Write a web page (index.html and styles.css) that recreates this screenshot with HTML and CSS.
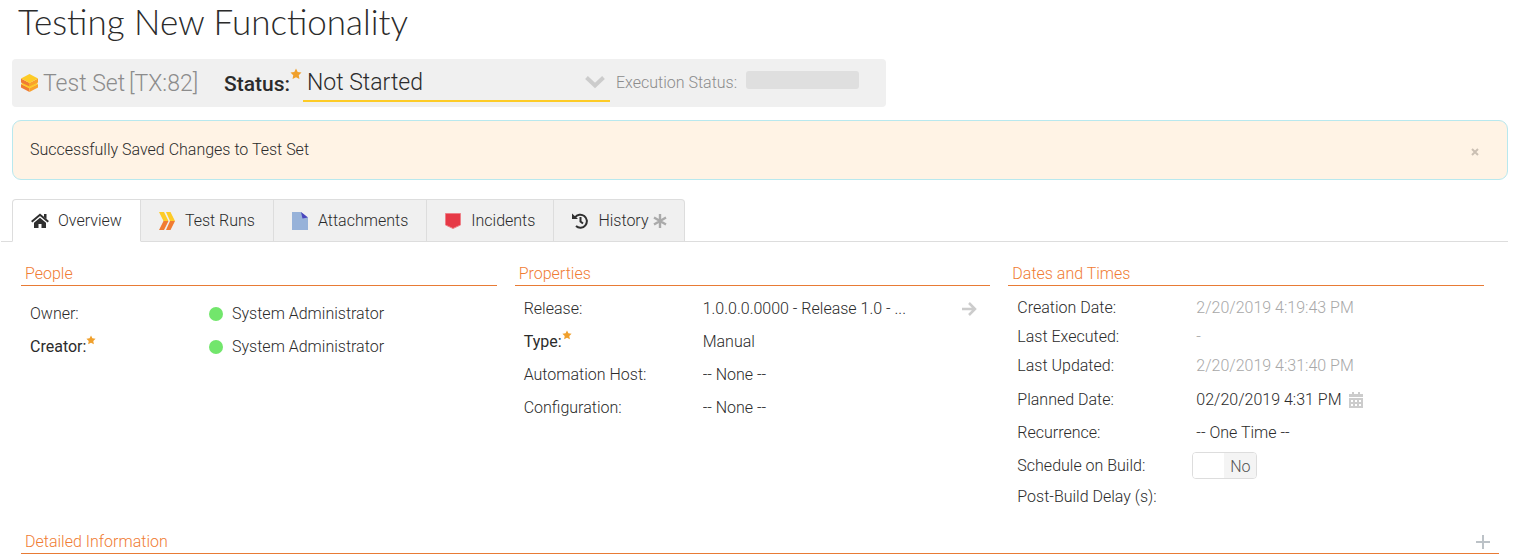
FILE: index.html
```html
<!DOCTYPE html>
<html lang="en">
<head>
<meta charset="utf-8">
<meta name="viewport" content="width=device-width, initial-scale=1">
<title>Testing New Functionality</title>
<link rel="stylesheet" href="styles.css">
</head>
<body>
<svg class="defs" width="0" height="0" aria-hidden="true">
  <symbol id="star" viewBox="0 0 24 24"><path fill="#f0a02c" d="M12 1l3.400 7 7.600 1-5.500 5.300 1.400 7.700L12 18.300 5.100 22l1.400-7.700L1 9l7.600-1z"/></symbol>
</svg>
<main class="page">
  <h1 class="title">Testing New Functionality</h1>

  <div class="status-bar">
    <svg class="artifact-icon" viewBox="0 0 17 18" aria-hidden="true">
      <path fill="#f07c33" d="M0 10v3.500L8.500 18v-4z"/><path fill="#f9a12b" d="M17 10v3.500L8.500 18v-4z"/>
      <path fill="#fdcb26" d="M0 10l2-1.500h13l2 1.500-8.500 4.500z"/>
      <path fill="#f07c33" d="M0 4.500v4l8.500 4V9z"/><path fill="#f9a12b" d="M17 4.500v4l-8.500 4V9z"/>
      <path fill="#fdcb26" d="M8.500 0L17 4.500 8.500 9 0 4.500z"/>
    </svg>
    <span class="artifact-name">Test Set</span>
    <span class="artifact-id">[TX:82]</span>
    <label class="status-label" for="status">Status:<svg class="star star-large" aria-hidden="true"><use href="#star"/></svg></label>
    <span class="status-field">
      <select id="status" class="status-select"><option>Not Started</option></select>
      <svg class="chevron" viewBox="0 0 20 14" aria-hidden="true"><path fill="none" stroke="#ccc" stroke-width="4" d="M1.500 2.500L10 10.500l8.500-8"/></svg>
    </span>
    <span class="execution-label">Execution Status:</span>
    <span class="execution-bar"></span>
  </div>

  <div class="alert" role="status">
    <span>Successfully Saved Changes to Test Set</span>
    <button class="alert-close" type="button" aria-label="Close"><svg viewBox="0 0 8 8" width="8" height="8"><path fill="none" stroke="#cbbfb3" stroke-width="2" d="M1 1l6 6M7 1L1 7"/></svg></button>
  </div>

  <nav class="tabs">
    <a class="tab tab-active" href="#overview">
      <svg class="tab-icon tab-icon-wide" viewBox="0 0 18 16" aria-hidden="true"><path fill="none" stroke="#2f2f2f" stroke-width="2" d="M.7 8.700L9 1.700l8.300 7"/><path fill="#2f2f2f" d="M13 1h2.500v5L13 4zM9 4.700l6 5V15h-4.500v-4h-3v4H3V9.700z"/></svg>
      <span>Overview</span></a>
    <a class="tab" href="#runs">
      <svg class="tab-icon" viewBox="0 0 16 18" aria-hidden="true"><path fill="#fdcb26" d="M0 0h5l4.500 9h-5zM7 0h4.500L16 9h-5z"/><path fill="#f07c33" d="M4.500 9h5L5 18H0zM11 9h5l-4.500 9H7z"/></svg>
      <span>Test Runs</span></a>
    <a class="tab" href="#attachments">
      <svg class="tab-icon" viewBox="0 0 16 18" aria-hidden="true"><path fill="#97b2d9" d="M0 0h9l7 6v12H0z"/><path fill="#4a46bd" d="M9 0l7 5.500-5.500 1z"/></svg>
      <span>Attachments</span></a>
    <a class="tab" href="#incidents">
      <svg class="tab-icon" viewBox="0 0 16 18" aria-hidden="true"><path fill="#e63946" stroke="#ee8088" d="M.5 1.500h15V13L8 16.500.5 13z"/></svg>
      <span>Incidents</span></a>
    <a class="tab" href="#history">
      <svg class="tab-icon" viewBox="0 0 16 18" aria-hidden="true"><path fill="none" stroke="#2f2f2f" stroke-width="2" d="M3 5.500A6.500 6.500 0 1 1 4 14M8.500 5v4.500l2.500 2"/><path fill="#2f2f2f" d="M0 1.500l6 5.500H0z"/></svg>
      <span>History</span>
      <svg class="asterisk" viewBox="0 0 14 14" role="img" aria-label="Has data"><path stroke="#aaa" stroke-width="2.400" d="M7 0v14M1 3.500l12 7M13 3.500l-12 7"/></svg></a>
  </nav>

  <div class="columns" id="overview">
    <section>
      <h2 class="heading">People</h2>
      <div class="fields fields-people">
        <div class="field"><label class="label" for="owner">Owner:</label><span class="dot"></span><select id="owner" class="value"><option>System Administrator</option></select></div>
        <div class="field"><label class="label required" for="creator">Creator:<svg class="star" aria-hidden="true"><use href="#star"/></svg></label><span class="dot"></span><select id="creator" class="value"><option>System Administrator</option></select></div>
      </div>
    </section>

    <section>
      <h2 class="heading">Properties</h2>
      <div class="fields">
        <div class="field"><label class="label" for="release">Release:</label><select id="release" class="value value-release"><option>1.0.0.0.0000 - Release 1.0 - ...</option></select>
          <a class="go" href="#release" aria-label="Open release"><svg viewBox="0 0 15 14" width="15" height="14"><path fill="none" stroke="#ccc" stroke-width="2.500" d="M0 7h13M7 1l6 6-6 6"/></svg></a></div>
        <div class="field"><label class="label required" for="type">Type:<svg class="star" aria-hidden="true"><use href="#star"/></svg></label><select id="type" class="value"><option>Manual</option></select></div>
        <div class="field"><label class="label" for="host">Automation Host:</label><select id="host" class="value"><option>-- None --</option></select></div>
        <div class="field"><label class="label" for="config">Configuration:</label><select id="config" class="value"><option>-- None --</option></select></div>
      </div>
    </section>

    <section>
      <h2 class="heading">Dates and Times</h2>
      <div class="fields">
        <div class="static-group">
          <div class="field field-short"><span class="label">Creation Date:</span><span class="readonly">2/20/2019 4:19:43 PM</span></div>
          <div class="field field-short"><span class="label">Last Executed:</span><span class="readonly">-</span></div>
          <div class="field field-short"><span class="label">Last Updated:</span><span class="readonly">2/20/2019 4:31:40 PM</span></div>
        </div>
        <div class="field"><label class="label" for="planned">Planned Date:</label><input id="planned" class="value value-date" type="text" value="02/20/2019 4:31 PM">
          <button class="calendar" type="button" aria-label="Pick a date"><svg viewBox="0 0 14 16" width="14" height="16"><path fill="#ccc" fill-rule="evenodd" d="M0 2h3V0h2v2h4V0h2v2h3v3H0zM0 6h14v10H0zM2 8v2h2V8zm4 0v2h2V8zm4 0v2h2V8zM2 12v2h2v-2zm4 0v2h2v-2zm4 0v2h2v-2z"/></svg></button></div>
        <div class="field"><label class="label" for="recurrence">Recurrence:</label><select id="recurrence" class="value"><option>-- One Time --</option></select></div>
        <div class="field"><label class="label label-toggle" for="build">Schedule on Build:</label><span class="toggle"><input id="build" class="toggle-input" type="checkbox"><span class="toggle-text">No</span></span></div>
        <div class="field field-short"><label class="label" for="delay">Post-Build Delay (s):</label><input id="delay" class="value" type="text"></div>
      </div>
    </section>
  </div>

  <section class="details">
    <h2 class="heading heading-toggle">Detailed Information
      <button class="expand" type="button" aria-label="Expand"><svg viewBox="0 0 14 14" width="14" height="14"><path stroke="#bcc2c7" stroke-width="2" d="M7 0v14M0 7h14"/></svg></button></h2>
  </section>
</main>
</body>
</html>
```
FILE: styles.css
```css
* { box-sizing: border-box; }
body {
  margin: 0;
  background: #fff;
  color: #2b2b2b;
  font: 300 16px/24px Roboto, "Liberation Sans", sans-serif;
}
.defs { position: absolute; }
.page { padding-right: 10px; }

.title {
  margin: 0 0 17px;
  padding: 0 18px;
  font: 300 35px/42px Lato, "Liberation Sans", sans-serif;
}

.status-bar {
  display: flex;
  align-items: center;
  width: fit-content;
  height: 48px;
  margin-left: 12px;
  padding: 0 27px 0 9px;
  border-radius: 4px;
  background: #f0f0f0;
  font-size: 23px;
}
.artifact-icon { width: 17px; height: 18px; margin-right: 5px; }
.artifact-name, .artifact-id, .status-label { padding-top: 2px; }
.artifact-name, .artifact-id { color: #8c8c8c; }
.artifact-name { width: 86px; }
.artifact-id { width: 95px; }
.status-label { display: flex; width: 79px; font-size: 21px; font-weight: 500; }
.status-field { position: relative; width: 307px; margin-right: 6px; }
.status-select {
  display: block;
  width: 100%;
  height: 38px;
  padding: 2px 30px 0 4px;
  border: 0;
  border-bottom: 2px solid #fdcb26;
  background: none;
  color: inherit;
  font: inherit;
  appearance: none;
}
.chevron { position: absolute; top: 11px; right: 5px; width: 20px; height: 14px; pointer-events: none; }
.execution-label { width: 130px; color: #8c8c8c; font-size: 16px; }
.execution-bar { width: 113px; height: 18px; margin-bottom: 6px; border-radius: 3px; background: #dfdfdf; }

.star { width: 10px; height: 10px; flex: none; }
.star-large { width: 12px; height: 12px; margin-top: -4px; }

.alert {
  display: flex;
  align-items: center;
  justify-content: space-between;
  height: 60px;
  margin: 13px 0 19px 12px;
  padding: 0 28px 0 17px;
  border: 1px solid #b8e8ee;
  border-radius: 9px;
  background: #fff3e5;
}
button { padding: 0; border: 0; background: none; line-height: 0; cursor: pointer; }
.alert-close { padding-top: 4px; }

.tabs { display: flex; margin-left: 1px; padding-left: 11px; border-bottom: 1px solid #ddd; }
.tab {
  display: flex;
  align-items: center;
  height: 43px;
  margin-bottom: -1px;
  padding: 0 18px;
  border: 1px solid #ddd;
  border-left-width: 0;
  background: #f0f0f0;
  color: inherit;
  text-decoration: none;
}
.tab-active { border-left-width: 1px; border-bottom-color: #fff; border-radius: 4px 0 0; background: #fff; }
.tab:last-child { padding-right: 17px; border-radius: 0 4px 0 0; }
.tab-icon { width: 16px; height: 18px; margin-right: 10px; }
.tab-icon-wide { width: 18px; height: 16px; margin-right: 9px; }
.asterisk { width: 14px; height: 14px; margin-left: 4px; }

.columns {
  display: grid;
  grid-template-columns: repeat(3, 1fr);
  gap: 18px;
  padding: 20px 24px 0 21px;
}
.heading {
  margin: 0;
  padding: 0 4px;
  border-bottom: 1px solid #e87b35;
  color: #f07c33;
  font-size: 16px;
  font-weight: 300;
  line-height: 23px;
}
.fields { padding: 6px 0 0 9px; }
.fields-people { padding-top: 11px; }
.static-group { padding: 1px 0 3px; }
.field { display: flex; align-items: center; height: 33px; }
.field-short { height: 29px; }
.label { display: flex; flex: none; width: 179px; }
.label-toggle { width: 175px; }
.required { font-weight: 400; }
.dot { width: 14px; height: 14px; margin-right: 9px; border-radius: 50%; background: #72e66c; }
.value {
  flex: 1;
  min-width: 0;
  height: 24px;
  padding: 0;
  border: 0;
  background: none;
  color: inherit;
  font: inherit;
  appearance: none;
}
.value-release { flex: 0 1 259px; }
.value-date { flex: 0 1 153px; }
.readonly { color: #a8a8a8; }
.go { line-height: 0; }

.toggle {
  display: flex;
  width: 65px;
  height: 27px;
  border: 1px solid #ddd;
  border-radius: 4px;
  overflow: hidden;
}
.toggle-input { width: 31px; height: 100%; margin: 0; background: #fff; appearance: none; }
.toggle-text { flex: 1; background: #f4f4f4; color: #555; line-height: 27px; text-align: center; }

.details { padding: 19px 9px 0 21px; }
.heading-toggle { display: flex; align-items: center; justify-content: space-between; padding-right: 9px; }
```
